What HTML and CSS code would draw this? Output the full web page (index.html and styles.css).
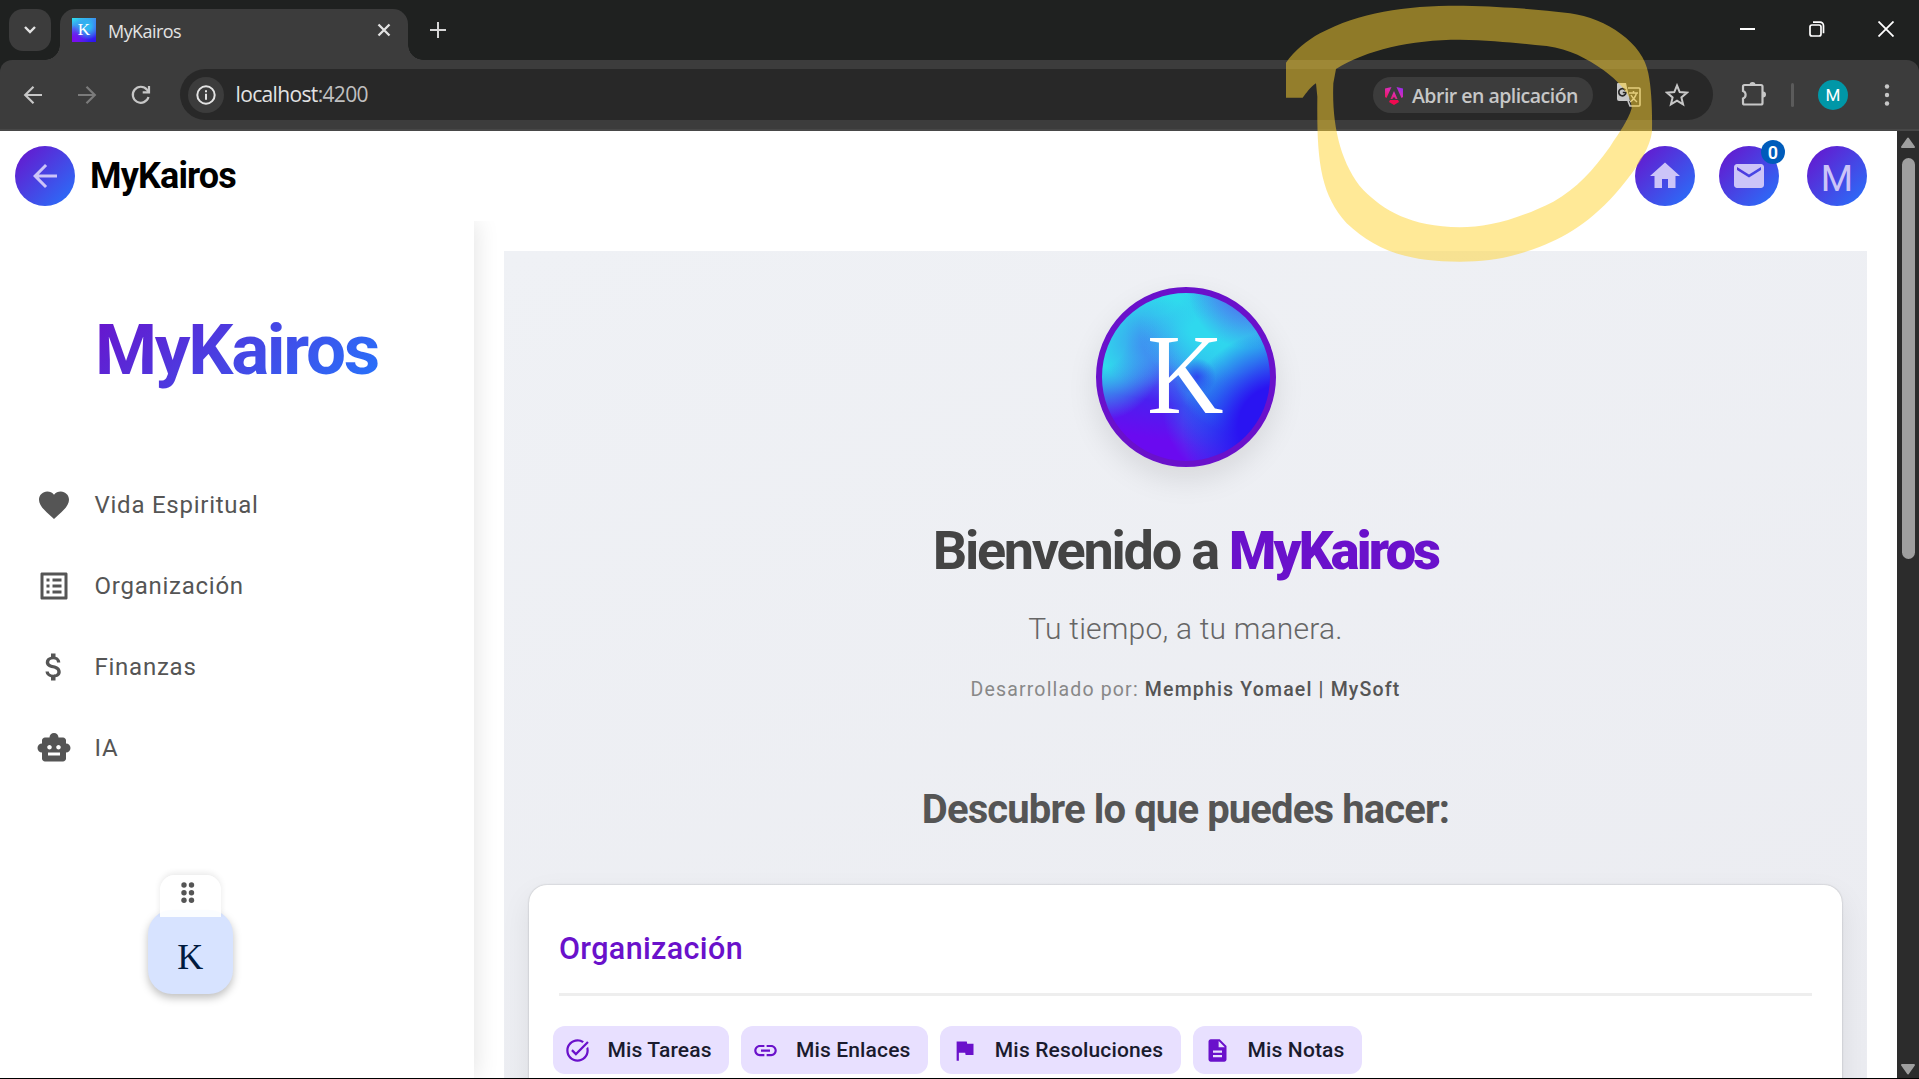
FILE: index.html
```html
<!DOCTYPE html>
<html lang="es">
<head>
<meta charset="utf-8">
<title>MyKairos</title>
<link rel="stylesheet" href="styles.css">
</head>
<body>
<header class="browser">
  <div class="tabstrip">
    <button class="tab-search"><svg width="14" height="10" viewBox="0 0 14 10"><path d="M2 2l5 5 5-5" fill="none" stroke="#e3e3e3" stroke-width="2.4"/></svg></button>
    <div class="tab">
      <span class="favicon">K</span>
      <span class="tab-title">MyKairos</span>
      <svg class="tab-close" width="14" height="14" viewBox="0 0 14 14"><path d="M1.5 1.5l11 11M12.500 1.500l-11 11" stroke="#e3e3e3" stroke-width="2.300"/></svg>
    </div>
    <svg class="tab-new" width="16" height="16" viewBox="0 0 16 16"><path d="M8 0v16M0 8h16" stroke="#d6d6d6" stroke-width="2"/></svg>
    <div class="window-controls">
      <svg width="16" height="16" viewBox="0 0 16 16"><path d="M0 8h15" stroke="#fff" stroke-width="2"/></svg>
      <svg width="16" height="16" viewBox="0 0 16 16" fill="none" stroke="#fff" stroke-width="1.700"><rect x="1" y="4" width="11" height="11" rx="2"/><path d="M4 1.200h7a3.500 3.500 0 0 1 3.500 3.500v7.500"/></svg>
      <svg width="16" height="16" viewBox="0 0 16 16"><path d="M.5.5l15 15M15.500.5l-15 15" stroke="#fff" stroke-width="1.800"/></svg>
    </div>
  </div>
  <div class="toolbar">
    <svg class="nav" width="20" height="20" viewBox="0 0 20 20" fill="none" stroke="#c7c7c7" stroke-width="2.200"><path d="M19 10H2.500M10.500 1.700L2.200 10l8.300 8.300"/></svg>
    <svg class="nav" width="20" height="20" viewBox="0 0 20 20" fill="none" stroke="#7b7b7b" stroke-width="2.200"><path d="M1 10h16.500M9.500 1.700l8.300 8.300-8.300 8.300"/></svg>
    <svg class="nav" width="20" height="20" viewBox="0 0 20 20" fill="none" stroke="#c7c7c7" stroke-width="2.200"><path d="M17.500 12A8 8 0 1 1 16 4.700l1.500 1.500M18 1v6.300h-6.300"/></svg>
    <div class="omnibox">
      <span class="site-info"><svg width="20" height="20" viewBox="0 0 20 20"><circle cx="10" cy="10" r="8.700" fill="none" stroke="#e3e3e3" stroke-width="2"/><path d="M10 8.800v6M10 5.200v2" stroke="#e3e3e3" stroke-width="2"/></svg></span>
      <span class="url">localhost<i>:4200</i></span>
      <span class="open-app">
        <svg width="18" height="18" viewBox="0 0 18 18"><defs><linearGradient id="ng" x1="0" y1="1" x2="1" y2="0"><stop offset="0" stop-color="#f0124a"/><stop offset=".5" stop-color="#e02bb0"/><stop offset="1" stop-color="#8a2cf6"/></linearGradient></defs><path fill="url(#ng)" d="M0 1.500L6.500 0 1.500 11 0 10zM11.500 0L18 1.500V10l-1.500 1zM9 4l3.500 8H10.500L10 10.500H8L7.500 12H5.500z"/><path fill="#f00a50" d="M5 13h8l1 2-5 3-5-3z"/></svg>
        <span>Abrir en aplicación</span>
      </span>
      <svg class="translate" width="25" height="26" viewBox="0 0 25 26"><path d="M2 1h8l4 18H3a2 2 0 0 1-2-2V2a1 1 0 0 1 1-1z" fill="#c7c7c7"/><path d="M9.500 8.300A3.600 3.600 0 1 0 10 10.500H6.800" fill="none" stroke="#282828" stroke-width="1.700"/><path d="M12 6h11a1 1 0 0 1 1 1v16a1 1 0 0 1-1 1H14l-2-5" fill="none" stroke="#c7c7c7" stroke-width="1.600"/><path d="M13 11h9M17.500 9v2M20.500 11c-1 4-3.500 7-6.500 9M15 13c1.500 3 3.500 5 6 7" fill="none" stroke="#c7c7c7" stroke-width="1.500"/></svg>
      <svg class="star" width="24" height="24" viewBox="0 0 24 24"><path d="M12 2.500l2.700 6.600 7.200.6-5.500 4.700 1.700 7L12 17.700l-6.100 3.700 1.700-7L2.100 9.700l7.200-.6z" fill="none" stroke="#c7c7c7" stroke-width="2"/></svg>
    </div>
    <svg class="puzzle" width="26" height="26" viewBox="0 0 26 26"><path d="M2 5.500a1.500 1.500 0 0 1 1.500-1.500H20a1.500 1.500 0 0 1 1.500 1.500V22a1.500 1.500 0 0 1-1.500 1.500H3.500A1.500 1.500 0 0 1 2 22v-4.500a4 4 0 0 0 0-7.500z" fill="none" stroke="#c7c7c7" stroke-width="2.200"/><path d="M8.500 4a3 3 0 0 1 6 0zM22 10.500a3 3 0 0 1 0 6z" fill="#c7c7c7"/></svg>
    <span class="separator"></span>
    <span class="profile">M</span>
    <svg class="more" width="6" height="24" viewBox="0 0 6 24" fill="#c7c7c7"><circle cx="3" cy="3.500" r="2.200"/><circle cx="3" cy="12" r="2.200"/><circle cx="3" cy="20.500" r="2.200"/></svg>
  </div>
</header>

<div class="viewport">
  <div class="app">
    <header class="app-bar">
      <button class="round"><svg width="36" height="36" viewBox="0 0 24 24"><path fill="#ccc4f8" d="M20 11H7.830l5.590-5.590L12 4l-8 8 8 8 1.410-1.410L7.830 13H20v-2z"/></svg></button>
      <span class="app-title">MyKairos</span>
      <nav class="app-actions">
        <button class="round"><svg width="36" height="36" viewBox="0 0 24 24"><path fill="#ccc4f8" d="M10 20v-6h4v6h5v-8h3L12 3 2 12h3v8z"/></svg></button>
        <button class="round mail"><svg width="36" height="36" viewBox="0 0 24 24"><path fill="#ccc4f8" d="M20 4H4c-1.100 0-1.990.9-1.990 2L2 18c0 1.100.9 2 2 2h16c1.100 0 2-.9 2-2V6c0-1.100-.9-2-2-2zm0 4l-8 5-8-5V6l8 5 8-5v2z"/></svg><span class="badge">0</span></button>
        <button class="round letter">M</button>
      </nav>
    </header>
    <div class="body">
      <aside class="sidebar">
        <div class="brand">MyKairos</div>
        <ul class="menu">
          <li><svg width="36" height="36" viewBox="0 0 24 24"><path d="M12 21.350l-1.450-1.320C5.400 15.360 2 12.280 2 8.500 2 5.420 4.420 3 7.500 3c1.740 0 3.410.81 4.500 2.090C13.090 3.810 14.760 3 16.500 3 19.580 3 22 5.420 22 8.500c0 3.780-3.400 6.860-8.550 11.540L12 21.350z"/></svg><span>Vida Espiritual</span></li>
          <li><svg width="36" height="36" viewBox="0 0 24 24"><path d="M19 5v14H5V5h14m1.100-2H3.900c-.5 0-.9.4-.9.900v16.200c0 .4.400.9.900.9h16.200c.4 0 .9-.5.900-.9V3.900c0-.5-.5-.9-.9-.9zM11 7h6v2h-6V7zm0 4h6v2h-6v-2zm0 4h6v2h-6zM7 7h2v2H7zm0 4h2v2H7zm0 4h2v2H7z"/></svg><span>Organización</span></li>
          <li><svg width="36" height="36" viewBox="0 0 24 24"><path d="M11.800 10.900c-2.270-.59-3-1.200-3-2.150 0-1.090 1.010-1.850 2.700-1.850 1.780 0 2.440.85 2.500 2.100h2.210c-.07-1.720-1.120-3.300-3.210-3.810V3h-3v2.160c-1.940.42-3.500 1.680-3.500 3.610 0 2.310 1.910 3.460 4.700 4.130 2.500.6 3 1.480 3 2.410 0 .69-.49 1.790-2.700 1.790-2.060 0-2.870-.92-2.980-2.100h-2.200c.12 2.190 1.760 3.420 3.680 3.830V21h3v-2.150c1.950-.37 3.500-1.500 3.500-3.550 0-2.840-2.430-3.810-4.700-4.400z"/></svg><span>Finanzas</span></li>
          <li><svg width="36" height="36" viewBox="0 0 24 24"><path d="M20 9V7c0-1.100-.9-2-2-2h-3c0-1.660-1.340-3-3-3S9 3.340 9 5H6c-1.100 0-2 .9-2 2v2c-1.660 0-3 1.340-3 3s1.340 3 3 3v4c0 1.100.9 2 2 2h12c1.100 0 2-.9 2-2v-4c1.660 0 3-1.340 3-3s-1.340-3-3-3zM7.500 11.500c0-.83.67-1.500 1.500-1.500s1.500.67 1.500 1.500S9.830 13 9 13s-1.500-.67-1.500-1.500zM16 17H8v-2h8v2zm-1-4c-.83 0-1.500-.67-1.500-1.500S14.170 10 15 10s1.500.67 1.500 1.500S15.830 13 15 13z"/></svg><span>IA</span></li>
        </ul>
      </aside>
      <main class="panel">
        <section class="hero">
          <div class="logo"><span>K</span></div>
          <h1>Bienvenido a <b>MyKairos</b></h1>
          <p class="tagline">Tu tiempo, a tu manera.</p>
          <p class="credit">Desarrollado por: <b>Memphis Yomael | MySoft</b></p>
          <h2>Descubre lo que puedes hacer:</h2>
        </section>
        <section class="card">
          <h3>Organización</h3>
          <div class="chips">
            <a class="chip"><svg width="27" height="27" viewBox="0 0 24 24"><path d="M22 5.180L10.590 16.600l-4.240-4.240 1.410-1.410 2.830 2.830 10-10L22 5.180zM19.790 10.220c.13.570.21 1.170.21 1.780 0 4.420-3.580 8-8 8s-8-3.580-8-8 3.580-8 8-8c1.580 0 3.040.46 4.280 1.250l1.440-1.440A9.900 9.900 0 0 0 12 2C6.480 2 2 6.480 2 12s4.480 10 10 10 10-4.480 10-10c0-1.190-.22-2.330-.6-3.390l-1.610 1.610z"/></svg><span>Mis Tareas</span></a>
            <a class="chip"><svg width="27" height="27" viewBox="0 0 24 24"><path d="M3.900 12c0-1.710 1.390-3.100 3.100-3.100h4V7H7c-2.760 0-5 2.240-5 5s2.240 5 5 5h4v-1.900H7c-1.710 0-3.100-1.390-3.100-3.100zM8 13h8v-2H8v2zm9-6h-4v1.900h4c1.710 0 3.100 1.390 3.100 3.100s-1.390 3.100-3.100 3.100h-4V17h4c2.760 0 5-2.240 5-5s-2.240-5-5-5z"/></svg><span>Mis Enlaces</span></a>
            <a class="chip"><svg width="27" height="27" viewBox="0 0 24 24"><path d="M14.400 6L14 4H5v17h2v-7h5.600l.4 2h7V6z"/></svg><span>Mis Resoluciones</span></a>
            <a class="chip"><svg width="27" height="27" viewBox="0 0 24 24"><path d="M14 2H6c-1.100 0-1.990.9-1.990 2L4 20c0 1.100.89 2 1.990 2H18c1.100 0 2-.9 2-2V8l-6-6zm2 16H8v-2h8v2zm0-4H8v-2h8v2zm-3-5V3.500L18.500 9H13z"/></svg><span>Mis Notas</span></a>
          </div>
        </section>
      </main>
    </div>
  </div>
  <div class="scrollbar">
    <svg width="16" height="12" viewBox="0 0 16 12"><path d="M8 1.500L14 10H2z" fill="#9f9f9f" stroke="#9f9f9f" stroke-width="2" stroke-linejoin="round"/></svg>
    <span class="thumb"></span>
    <svg class="down" width="16" height="12" viewBox="0 0 16 12"><path d="M8 10.500L14 2H2z" fill="#9f9f9f" stroke="#9f9f9f" stroke-width="2" stroke-linejoin="round"/></svg>
  </div>
</div>

<div class="assistant">
  <button class="assistant-key">K</button>
  <div class="assistant-grip"><svg width="14" height="22" viewBox="0 0 14 22" fill="#555"><circle cx="3" cy="3" r="2.700"/><circle cx="10.500" cy="3" r="2.700"/><circle cx="3" cy="10.700" r="2.700"/><circle cx="10.500" cy="10.700" r="2.700"/><circle cx="3" cy="18.300" r="2.700"/><circle cx="10.500" cy="18.300" r="2.700"/></svg></div>
</div>

<svg class="marker" width="400" height="270" viewBox="0 0 1200 810"><path fill="#ffd32f" fill-opacity=".5" fill-rule="evenodd" d="M78 188C105 150 140 122 180 100C300 35 440 16 610 17C740 20 830 28 930 40C1040 55 1150 130 1165 220C1175 270 1177 330 1176 395C1170 440 1140 490 1100 540C1010 655 930 705 840 740C750 775 680 785 600 785C430 785 340 745 260 670C180 580 170 480 172 290L168 250C150 262 140 278 128 293H78ZM228 207C320 150 450 119 600 119C700 121 780 130 860 138C930 148 980 175 1030 210C1090 255 1115 290 1115 325C1105 360 1080 395 1050 440C1000 510 950 565 880 605C770 660 680 682 600 682C450 680 370 630 310 570C240 490 215 370 220 250Z"/></svg>
</body>
</html>
```
FILE: styles.css
```css
* { box-sizing: border-box; }
body { margin: 0; width: 1919px; height: 1079px; display: flex; flex-direction: column; overflow: hidden; background: #000; font-family: Roboto, sans-serif; position: relative; }
button { border: 0; padding: 0; margin: 0; font: inherit; }
h1, h2, h3, p, ul { margin: 0; padding: 0; }
i { font-style: normal; }
svg { display: block; flex: none; }

/* Browser window */
.browser { flex: none; height: 131px; background: #1f2120; font-family: "Open Sans", "Noto Sans", sans-serif; }
.tabstrip { height: 60px; display: flex; align-items: flex-start; padding: 9px 25px 0 9px; }
.tab-search { width: 42px; height: 42px; border-radius: 14px; background: #3c3c3c; display: grid; place-items: center; }
.tab { position: relative; width: 348px; height: 51px; margin-left: 9px; border-radius: 15px 15px 0 0; background: #3c3c3c; display: flex; align-items: center; padding: 0 17px 9px 12px; }
.tab::before, .tab::after { content: ""; position: absolute; bottom: 0; width: 15px; height: 15px; }
.tab::before { left: -15px; background: radial-gradient(circle at 0 0, transparent 14.5px, #3c3c3c 15px); }
.tab::after { right: -15px; background: radial-gradient(circle at 100% 0, transparent 14.5px, #3c3c3c 15px); }
.favicon { width: 24px; height: 24px; background: radial-gradient(circle at 65% 35%, #2fb6f0 15%, transparent 60%), radial-gradient(circle at 0 100%, #7a0cf0 10%, transparent 50%), linear-gradient(155deg, #2fd8ee 5%, #4d3ff0 55%, #2a10f0); color: #fff; font: 17px/24px "Liberation Serif", serif; text-align: center; }
.tab-title { margin-left: 12px; margin-top: 2px; flex: 1; font-size: 18px; line-height: 24px; color: #e3e3e3; letter-spacing: -0.55px; }
.tab-new { margin: 13px 0 0 22px; }
.window-controls { margin: 12px 0 0 auto; display: flex; gap: 53px; }
.toolbar { height: 71px; padding: 9px 29px 0 23px; display: flex; align-items: flex-start; background: #3c3c3c; border-radius: 12px 12px 0 0; border-bottom: 2px solid #474747; }
.nav { margin: 16px 34px 0 0; }
.omnibox { margin-left: -5px; width: 1533px; height: 51px; border-radius: 26px; background: #282828; display: flex; align-items: center; padding-left: 7.5px; }
.site-info { width: 36px; height: 36px; border-radius: 50%; background: #3c3c3c; display: grid; place-items: center; }
.url { margin: -2px 0 0 12px; flex: 1; font-size: 21px; line-height: 30px; letter-spacing: -0.65px; color: #e3e3e3; }
.url i { color: #c0c0c0; }
.open-app { width: 220px; height: 36px; border-radius: 18px; background: #3c3c3c; display: flex; align-items: center; padding: 2px 0 0 12px; gap: 9px; font-size: 19.5px; font-weight: 600; letter-spacing: -0.52px; color: #c7c7c7; white-space: nowrap; }
.translate { margin-left: 23px; }
.star { margin: 0 24px 0 24px; }
.puzzle { margin: 12px 0 0 28px; }
.separator { width: 3px; height: 24px; margin: 14px 0 0 24px; border-radius: 2px; background: #5b5b5b; }
.profile { width: 30px; height: 30px; margin: 11px 0 0 24px; border-radius: 50%; background: #0097a7; color: #fff; font: 17px/31px Roboto, sans-serif; text-align: center; }
.more { margin: 14px 0 0 auto; }

/* Page */
.viewport { height: 947px; flex: none; display: flex; background: #fff; overflow: hidden; }
.app { width: 1897px; display: flex; flex-direction: column; }
.app-bar { height: 90px; flex: none; display: flex; align-items: center; padding: 0 30px 0 15px; }
.round { position: relative; width: 60px; height: 60px; border-radius: 50%; background: linear-gradient(135deg, #6a11cb, #2575fc); display: grid; place-items: center; color: #ccc4f8; }
.app-title { margin: 0 0 0 15px; font-size: 36px; font-weight: 700; letter-spacing: -0.85px; color: #000; }
.app-actions { margin-left: auto; display: flex; gap: 24px; }
.app-actions .letter { margin-left: 4px; font-size: 37px; padding-top: 5px; }
.badge { position: absolute; right: -6px; top: -6px; width: 24px; height: 24px; border-radius: 50%; background: #005cbb; color: #fff; font-size: 18px; line-height: 25px; font-weight: 600; text-align: center; }
.body { flex: 1; display: flex; min-height: 0; }
.sidebar { width: 474px; padding-top: 87px; box-shadow: 3px 0 22px rgba(0, 0, 0, 0.1); clip-path: inset(0 -30px 0 0); }
.brand { width: fit-content; margin-left: 94px; padding-left: 1px; font-size: 71px; line-height: 84px; font-weight: 700; letter-spacing: -2.3px; color: transparent; background: linear-gradient(135deg, #6a11cb, #2575fc); background-clip: text; -webkit-background-clip: text; }
.menu { list-style: none; margin-top: 72px; }
.menu li { height: 81px; display: flex; align-items: center; gap: 22.5px; padding-left: 36px; font-size: 24px; letter-spacing: 0.75px; color: #555; fill: #555; }
.panel { width: 1363px; margin: 30px 0 0 30px; background: linear-gradient(160deg, #eff1f5, #ebecf1); padding: 36px 25px 0; }
.hero { display: flex; flex-direction: column; align-items: center; text-align: center; white-space: nowrap; }
.logo { width: 180px; height: 180px; border: 6px solid #6a11cb; border-radius: 50%; display: grid; place-items: center; box-shadow: 0 12px 30px rgba(0, 0, 0, 0.1);
  background:
    radial-gradient(circle at 56% 50%, rgba(45, 60, 240, 0.9), transparent 14%),
    radial-gradient(circle at 102% 78%, #2a14f2 18%, transparent 42%),
    radial-gradient(circle at 85% 0%, rgba(85, 95, 240, 0.95) 4%, transparent 26%),
    radial-gradient(ellipse 36% 30% at 60% 24%, #2fd8ee 20%, transparent),
    radial-gradient(ellipse 40% 46% at 80% 36%, #2fcfee 25%, transparent),
    radial-gradient(ellipse 34% 44% at 70% 62%, rgba(32, 140, 240, 0.95) 10%, transparent),
    radial-gradient(ellipse 30% 26% at 30% 30%, rgba(66, 130, 242, 0.8), transparent),
    radial-gradient(ellipse 36% 46% at 4% 28%, #2fdcec 35%, transparent),
    radial-gradient(ellipse 42% 30% at 30% 4%, #2fdcec 40%, transparent),
    linear-gradient(190deg, #3ba6ef 15%, #4575f2 45%, #4a20f0 64%, #6a0af0 82%); background-origin: border-box; }
.logo span { margin-top: -4px; color: #fff; font: 114px/110px "Liberation Serif", serif; transform: scaleX(0.93); }
h1 { margin-top: 52px; font-size: 54px; line-height: 64px; font-weight: 700; letter-spacing: -2.25px; color: #444; }
h1 b { color: #6a11cb; letter-spacing: -2.7px; }
.tagline { margin-top: 28px; font-size: 30px; line-height: 36px; font-weight: 300; letter-spacing: 0.2px; color: #666; }
.credit { margin-top: 31px; font-size: 19.5px; line-height: 24px; letter-spacing: 1.17px; color: #888; }
.credit b { font-weight: 500; color: #555; }
h2 { margin-top: 84px; font-size: 40px; line-height: 48px; font-weight: 700; letter-spacing: -0.87px; color: #555; }
.card { height: 400px; margin-top: 51px; padding: 46px 30px 0; border-radius: 18px; background: #fff; box-shadow: 0 0 2px rgba(0, 0, 0, 0.25), 0 12px 30px rgba(0, 0, 0, 0.08); }
h3 { height: 65px; border-bottom: 3px solid #eee; font-size: 30.5px; line-height: 35px; font-weight: 500; letter-spacing: 0.35px; color: #6a11cb; }
.chips { display: flex; gap: 12px; margin: 30px 0 0 -6px; }
.chip { height: 48px; border-radius: 12px; background: #e8e0ff; display: flex; align-items: center; gap: 16.5px; padding: 0 17.8px 0 11px; font-size: 21px; font-weight: 500; letter-spacing: 0.15px; color: #1a1b2e; fill: #6a11cb; white-space: nowrap; }
.scrollbar { width: 22px; background: #2c2c2c; display: flex; flex-direction: column; align-items: center; padding-top: 6px; }
.thumb { width: 13px; height: 401px; margin-top: 9px; border-radius: 7px; background: #9f9f9f; }
.down { margin-top: auto; margin-bottom: 3px; }

/* Draggable assistant button */
.assistant { position: absolute; left: 148px; top: 875px; width: 85px; }
.assistant-key { display: block; width: 84.5px; height: 84px; margin-top: 35px; border-radius: 24px; background: #d7e3ff; color: #001b3f; font: 36px/84px "Liberation Serif", serif; padding-top: 5px; text-align: center; box-shadow: 0 4px 8px rgba(0, 0, 0, 0.25); }
.assistant-grip { position: absolute; left: 12px; top: 0; width: 61px; height: 42px; border-radius: 15px 15px 0 0; background: rgba(255, 255, 255, 0.9); box-shadow: 0 -2px 6px rgba(0, 0, 0, 0.09); padding: 7px 0 0 21px; clip-path: inset(-10px -10px 0); }

/* Highlighter stroke */
.marker { position: absolute; left: 1260px; top: 0; pointer-events: none; }
```
